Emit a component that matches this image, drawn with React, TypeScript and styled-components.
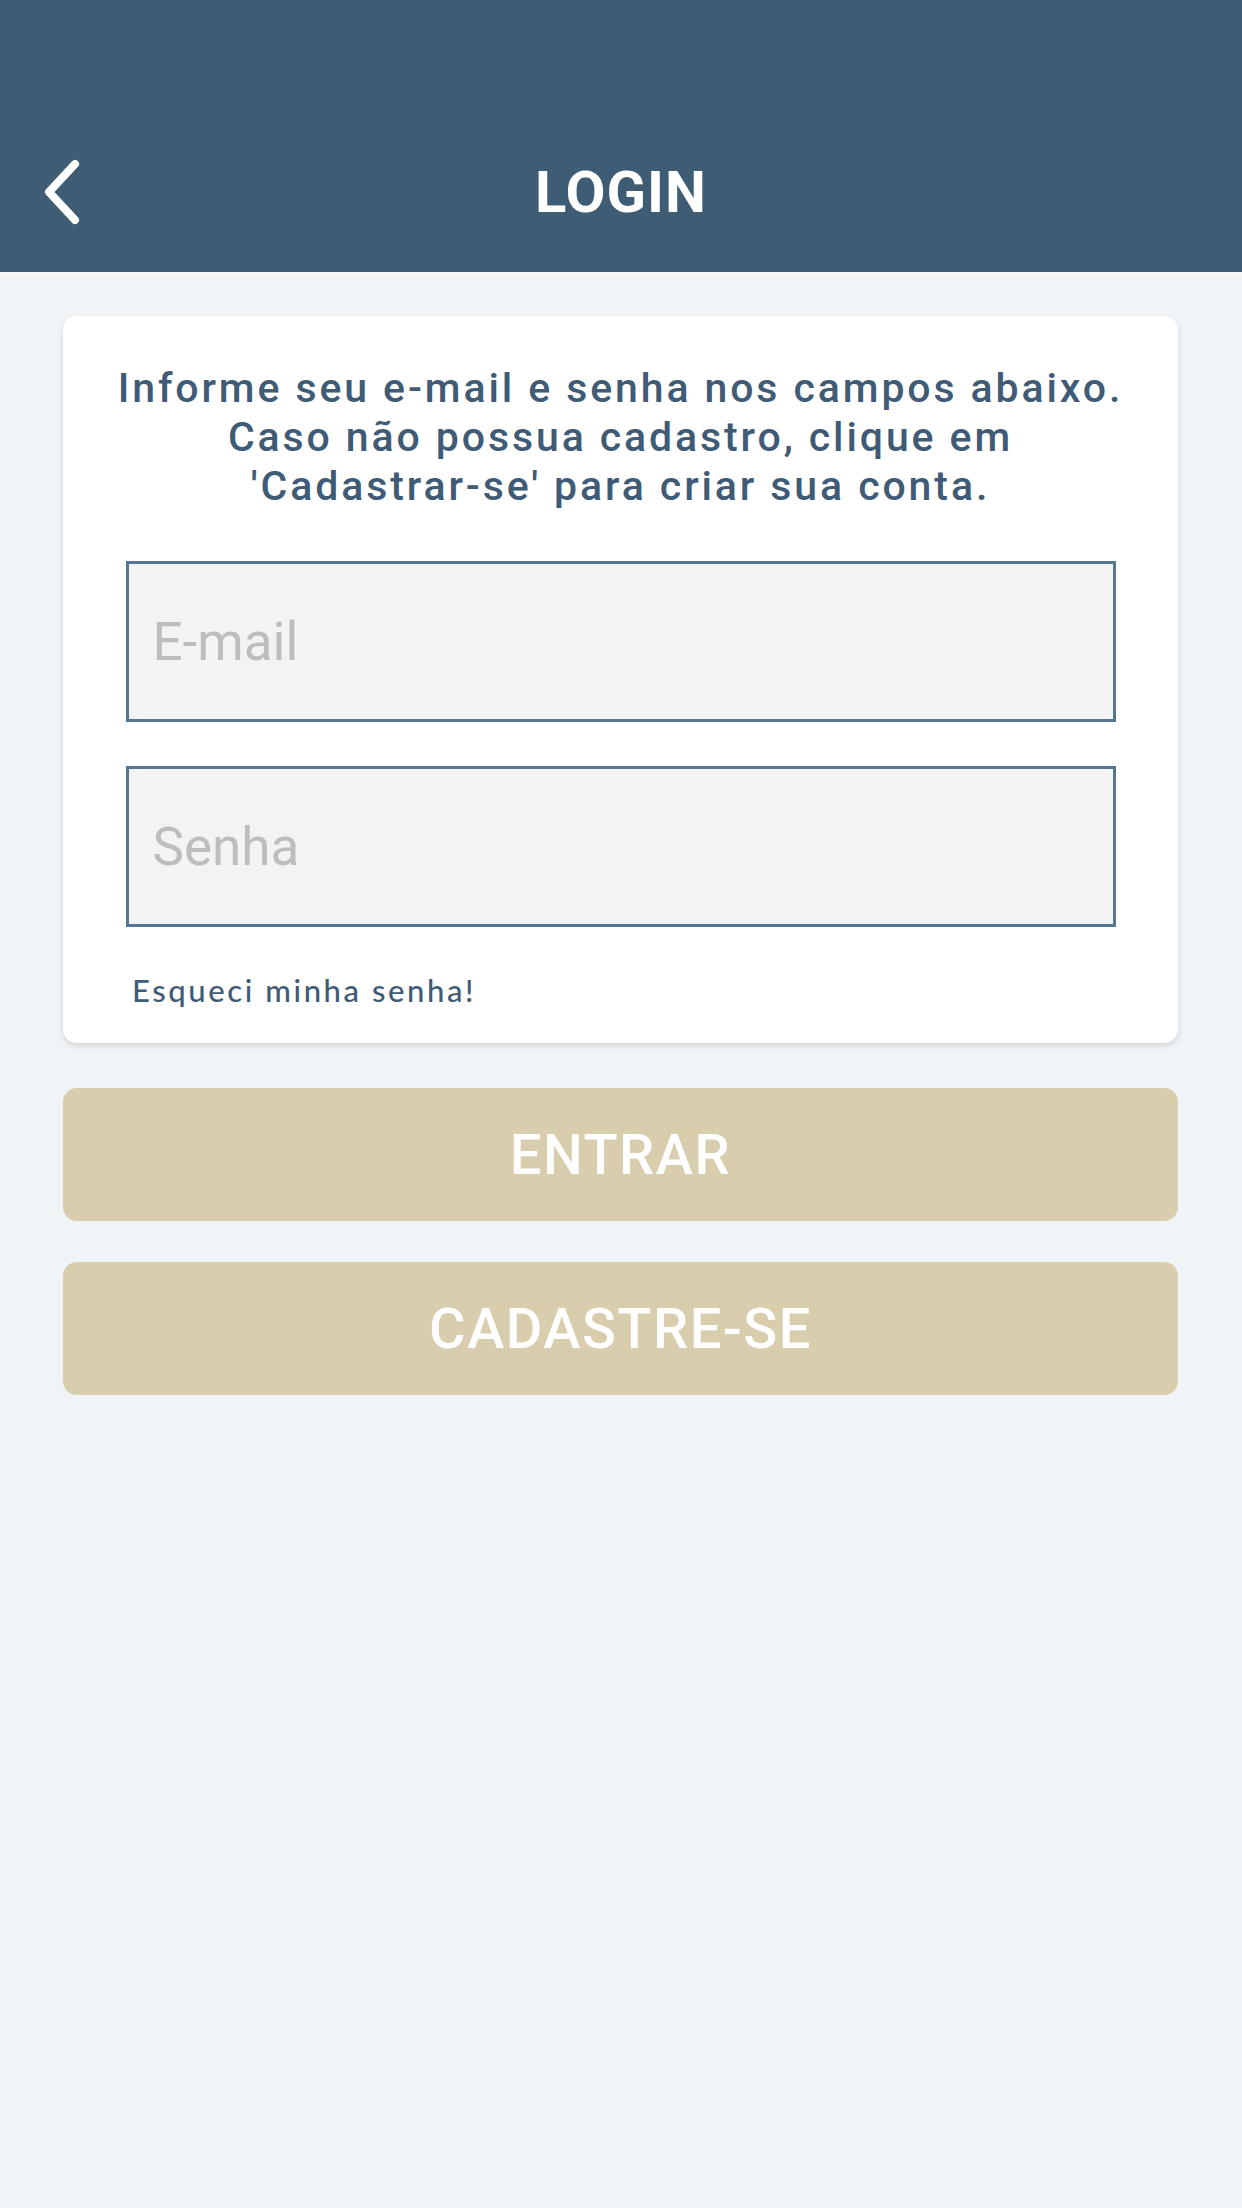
import React from 'react';
import styled, { createGlobalStyle } from 'styled-components';

const GlobalStyle = createGlobalStyle`
	html, body {
		margin: 0;
		padding: 0;
		background: #f1f4f7;
	}
	* {
		box-sizing: border-box;
	}
`;

const Page = styled.div`
	width: 1242px;
	min-height: 2208px;
	background: #f1f4f7;
	font-family: Roboto, 'Liberation Sans', sans-serif;
`;

const Header = styled.header`
	height: 275px;
	background: #3e5c74;
	padding-top: 112px;
	border-bottom: 3px solid #f7f9fb;
`;

const NavBar = styled.div`
	position: relative;
	height: 160px;
	display: flex;
	align-items: center;
	justify-content: center;
`;

const BackButton = styled.button`
	position: absolute;
	left: 41px;
	top: 50%;
	transform: translateY(-50%);
	background: none;
	border: none;
	padding: 0;
	display: flex;
	cursor: pointer;
`;

const Title = styled.h1`
	margin: 0;
	color: #fff;
	font-size: 58px;
	font-weight: 700;
	letter-spacing: 1px;
`;

const Content = styled.main`
	padding: 41px 64px 0 63px;
	display: flex;
	flex-direction: column;
`;

const Card = styled.section`
	background: #fff;
	border-radius: 14px;
	box-shadow: 0 3px 6px rgba(0, 0, 0, 0.12);
	padding: 48px 30px 35px;
	display: flex;
	flex-direction: column;
`;

const Intro = styled.p`
	margin: 0 0 50px;
	text-align: center;
	color: #3f5b76;
	font-size: 41px;
	font-weight: 500;
	line-height: 49px;
	letter-spacing: 2.9px;
`;

const Field = styled.input`
	height: 161px;
	width: 990px;
	align-self: center;
	border: 3px solid #557796;
	background: #f3f3f3;
	padding: 0 24px;
	font-family: Roboto, 'Liberation Sans', sans-serif;
	font-size: 53px;
	color: #333;
	outline: none;

	& + & {
		margin-top: 44px;
	}

	&::placeholder {
		color: #bdbdbd;
	}
`;

const ForgotLink = styled.a`
	margin: 45px 0 0 39px;
	color: #3f5b76;
	font-family: Lato, 'Liberation Sans', sans-serif;
	font-size: 31px;
	font-weight: 500;
	line-height: 36px;
	letter-spacing: 2.6px;
	text-decoration: none;
`;

const ActionButton = styled.button<{ $spaced?: boolean }>`
	height: 133px;
	margin-top: ${({ $spaced }) => ($spaced ? '41px' : '45px')};
	border: none;
	border-radius: 14px;
	background: #d8cdac;
	color: #fff;
	font-family: Roboto, 'Liberation Sans', sans-serif;
	font-size: 56px;
	font-weight: 500;
	letter-spacing: 1.5px;
	cursor: pointer;
`;

const ChevronLeft = () => (
	<svg width='44' height='66' viewBox='0 0 44 66' fill='none'>
		<path
			d='M34 5 L8 33 L34 61'
			stroke='#fff'
			strokeWidth='8'
			strokeLinecap='round'
			strokeLinejoin='round'
		/>
	</svg>
);

const App: React.FC = () => (
	<Page>
		<GlobalStyle />
		<Header>
			<NavBar>
				<BackButton aria-label='Voltar'>
					<ChevronLeft />
				</BackButton>
				<Title>LOGIN</Title>
			</NavBar>
		</Header>
		<Content>
			<Card>
				<Intro>
					Informe seu e-mail e senha nos campos abaixo.
					<br />
					Caso não possua cadastro, clique em
					<br />
					'Cadastrar-se' para criar sua conta.
				</Intro>
				<Field type='email' placeholder='E-mail' />
				<Field type='password' placeholder='Senha' />
				<ForgotLink href='#'>Esqueci minha senha!</ForgotLink>
			</Card>
			<ActionButton>ENTRAR</ActionButton>
			<ActionButton $spaced>CADASTRE-SE</ActionButton>
		</Content>
	</Page>
);

export default App;
